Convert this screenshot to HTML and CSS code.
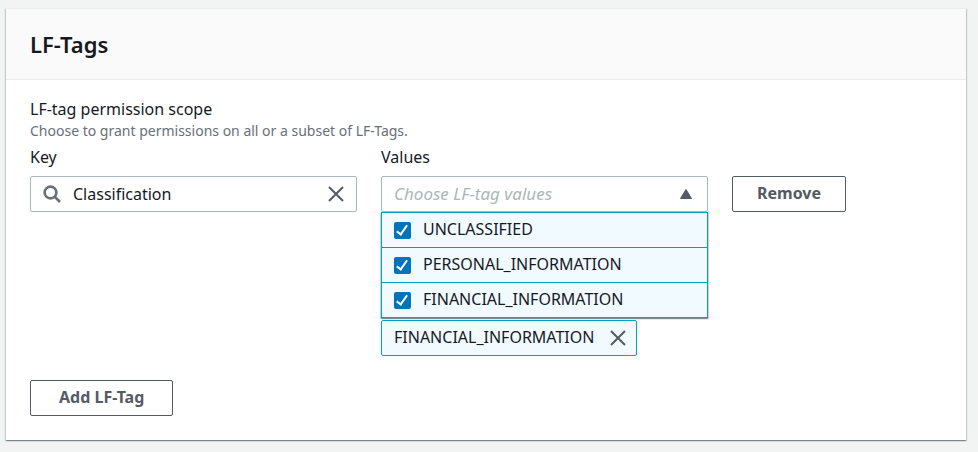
FILE: index.html
```html
<!DOCTYPE html>
<html lang="en">
<head>
<meta charset="utf-8">
<meta name="viewport" content="width=device-width, initial-scale=1">
<title>LF-Tags</title>
<link rel="stylesheet" href="styles.css">
</head>
<body>
<section class="card">
  <header class="card-header"><h2>LF-Tags</h2></header>
  <div class="card-body">
    <h3 class="scope-title">LF-tag permission scope</h3>
    <p class="scope-hint">Choose to grant permissions on all or a subset of LF-Tags.</p>
    <div class="tag-row">
      <div class="field">
        <label for="key">Key</label>
        <div class="control">
          <svg class="search-icon" viewBox="0 0 18 18" aria-hidden="true"><circle cx="7.500" cy="7.500" r="5.900"/><path d="M12 12l5 5"/></svg>
          <input id="key" class="key-input" type="text" value="Classification">
          <button class="close" type="button" aria-label="Clear"><svg viewBox="0 0 16 16"><path d="M1 1l14 14M15 1L1 15"/></svg></button>
        </div>
      </div>
      <div class="field">
        <label for="values">Values</label>
        <div class="values">
          <button id="values" class="control trigger" type="button" aria-haspopup="true" aria-expanded="true">
            <span class="placeholder">Choose LF-tag values</span>
            <svg class="caret" viewBox="0 0 14 12" aria-hidden="true"><path d="M7 1.5L12.5 10.500H1.500Z"/></svg>
          </button>
          <div class="menu">
            <label class="option"><input type="checkbox" checked><span>UNCLASSIFIED</span></label>
            <label class="option"><input type="checkbox" checked><span>PERSONAL_INFORMATION</span></label>
            <label class="option"><input type="checkbox" checked><span>FINANCIAL_INFORMATION</span></label>
          </div>
        </div>
        <div class="token">
          <span>FINANCIAL_INFORMATION</span>
          <button class="close" type="button" aria-label="Remove value"><svg viewBox="0 0 16 16"><path d="M1 1l14 14M15 1L1 15"/></svg></button>
        </div>
      </div>
      <div class="field action"><button class="button" type="button">Remove</button></div>
    </div>
    <button class="button button-wide" type="button">Add LF-Tag</button>
  </div>
</section>
</body>
</html>
```
FILE: styles.css
```css
* { box-sizing: border-box; }

body {
  margin: 0;
  padding: 8px 12px 12px 6px;
  background: #f2f3f3;
  color: #16191f;
  font: 16px/22px "Noto Sans", "Open Sans", sans-serif;
}

h2, h3, p { margin: 0; }

button, input { font: inherit; color: inherit; }

svg {
  display: block;
  fill: none;
  stroke: #545b64;
  stroke-width: 2;
}

.card {
  background: #fff;
  border-top: 1px solid #eaeded;
  box-shadow: 0 1px 1px 0 rgba(0, 28, 36, .3), 1px 1px 1px 0 rgba(0, 28, 36, .15), -1px 1px 1px 0 rgba(0, 28, 36, .15);
}

.card-header {
  padding: 20px 24px;
  background: #fafafa;
  border-bottom: 1px solid #eaeded;
}

.card-header h2 { font-size: 22px; line-height: 30px; font-weight: 600; }

.card-body { padding: 18px 24px 24px; }

.scope-title { font-size: 16px; font-weight: 400; }

.scope-hint { color: #687078; font-size: 14px; }

.tag-row {
  display: grid;
  grid-template-columns: 3fr 3fr 2fr;
  margin: 4px -24px 24px 0;
}

.field { padding-right: 24px; }

.field > label { display: block; margin-bottom: 8px; }

.control {
  display: flex;
  align-items: center;
  width: 100%;
  height: 36px;
  padding: 0 12px;
  background: #fff;
  border: 1px solid #aab7b8;
  border-radius: 2px;
}

.search-icon { flex: none; width: 18px; height: 18px; stroke: #687078; stroke-width: 2.6; }

.key-input {
  flex: 1;
  min-width: 0;
  padding: 0 12px;
  border: 0;
  outline: 0;
  background: none;
}

.close { flex: none; padding: 0; border: 0; background: none; }

.close svg { width: 16px; height: 16px; }

.trigger { justify-content: space-between; }

.placeholder { color: #aab7b8; font-size: 17px; font-style: italic; }

.caret { width: 14px; height: 12px; margin-right: 2px; fill: #545b64; stroke-width: 1; stroke-linejoin: round; }

.values { position: relative; }

.menu {
  position: absolute;
  top: 100%;
  left: 0;
  right: 0;
  background: #f1faff;
  border: 1px solid #00a1c9;
  box-shadow: 0 1px 1px 0 rgba(0, 28, 36, .3), 1px 1px 1px 0 rgba(0, 28, 36, .15), -1px 1px 1px 0 rgba(0, 28, 36, .15);
}

.option {
  display: flex;
  align-items: center;
  gap: 12px;
  padding: 5px 12px 7px;
}

.option + .option { border-top: 1px solid #00a1c9; }

.option input {
  appearance: none;
  width: 17px;
  height: 17px;
  margin: 2px 0 0;
  border-radius: 2px;
  background: #0073bb;
}

.option input:checked::before {
  content: "";
  box-sizing: border-box;
  display: block;
  width: 6px;
  height: 12px;
  margin: 1px 0 0 5px;
  border: solid #fff;
  border-width: 0 2px 2px 0;
  transform: rotate(35deg);
}

.token {
  display: flex;
  align-items: center;
  gap: 16px;
  width: fit-content;
  height: 36px;
  margin-top: 108px;
  padding: 0 10px 0 12px;
  background: #f1faff;
  border: 1px solid #00a1c9;
  border-radius: 2px;
}

.token span { padding-bottom: 2px; }

.action { padding-top: 30px; }

.button {
  height: 36px;
  padding: 0 24px 2px;
  background: #fff;
  border: 1px solid #545b64;
  border-radius: 2px;
  color: #545b64;
  font-weight: 700;
}

.button-wide { padding-left: 28px; padding-right: 28px; }
```
